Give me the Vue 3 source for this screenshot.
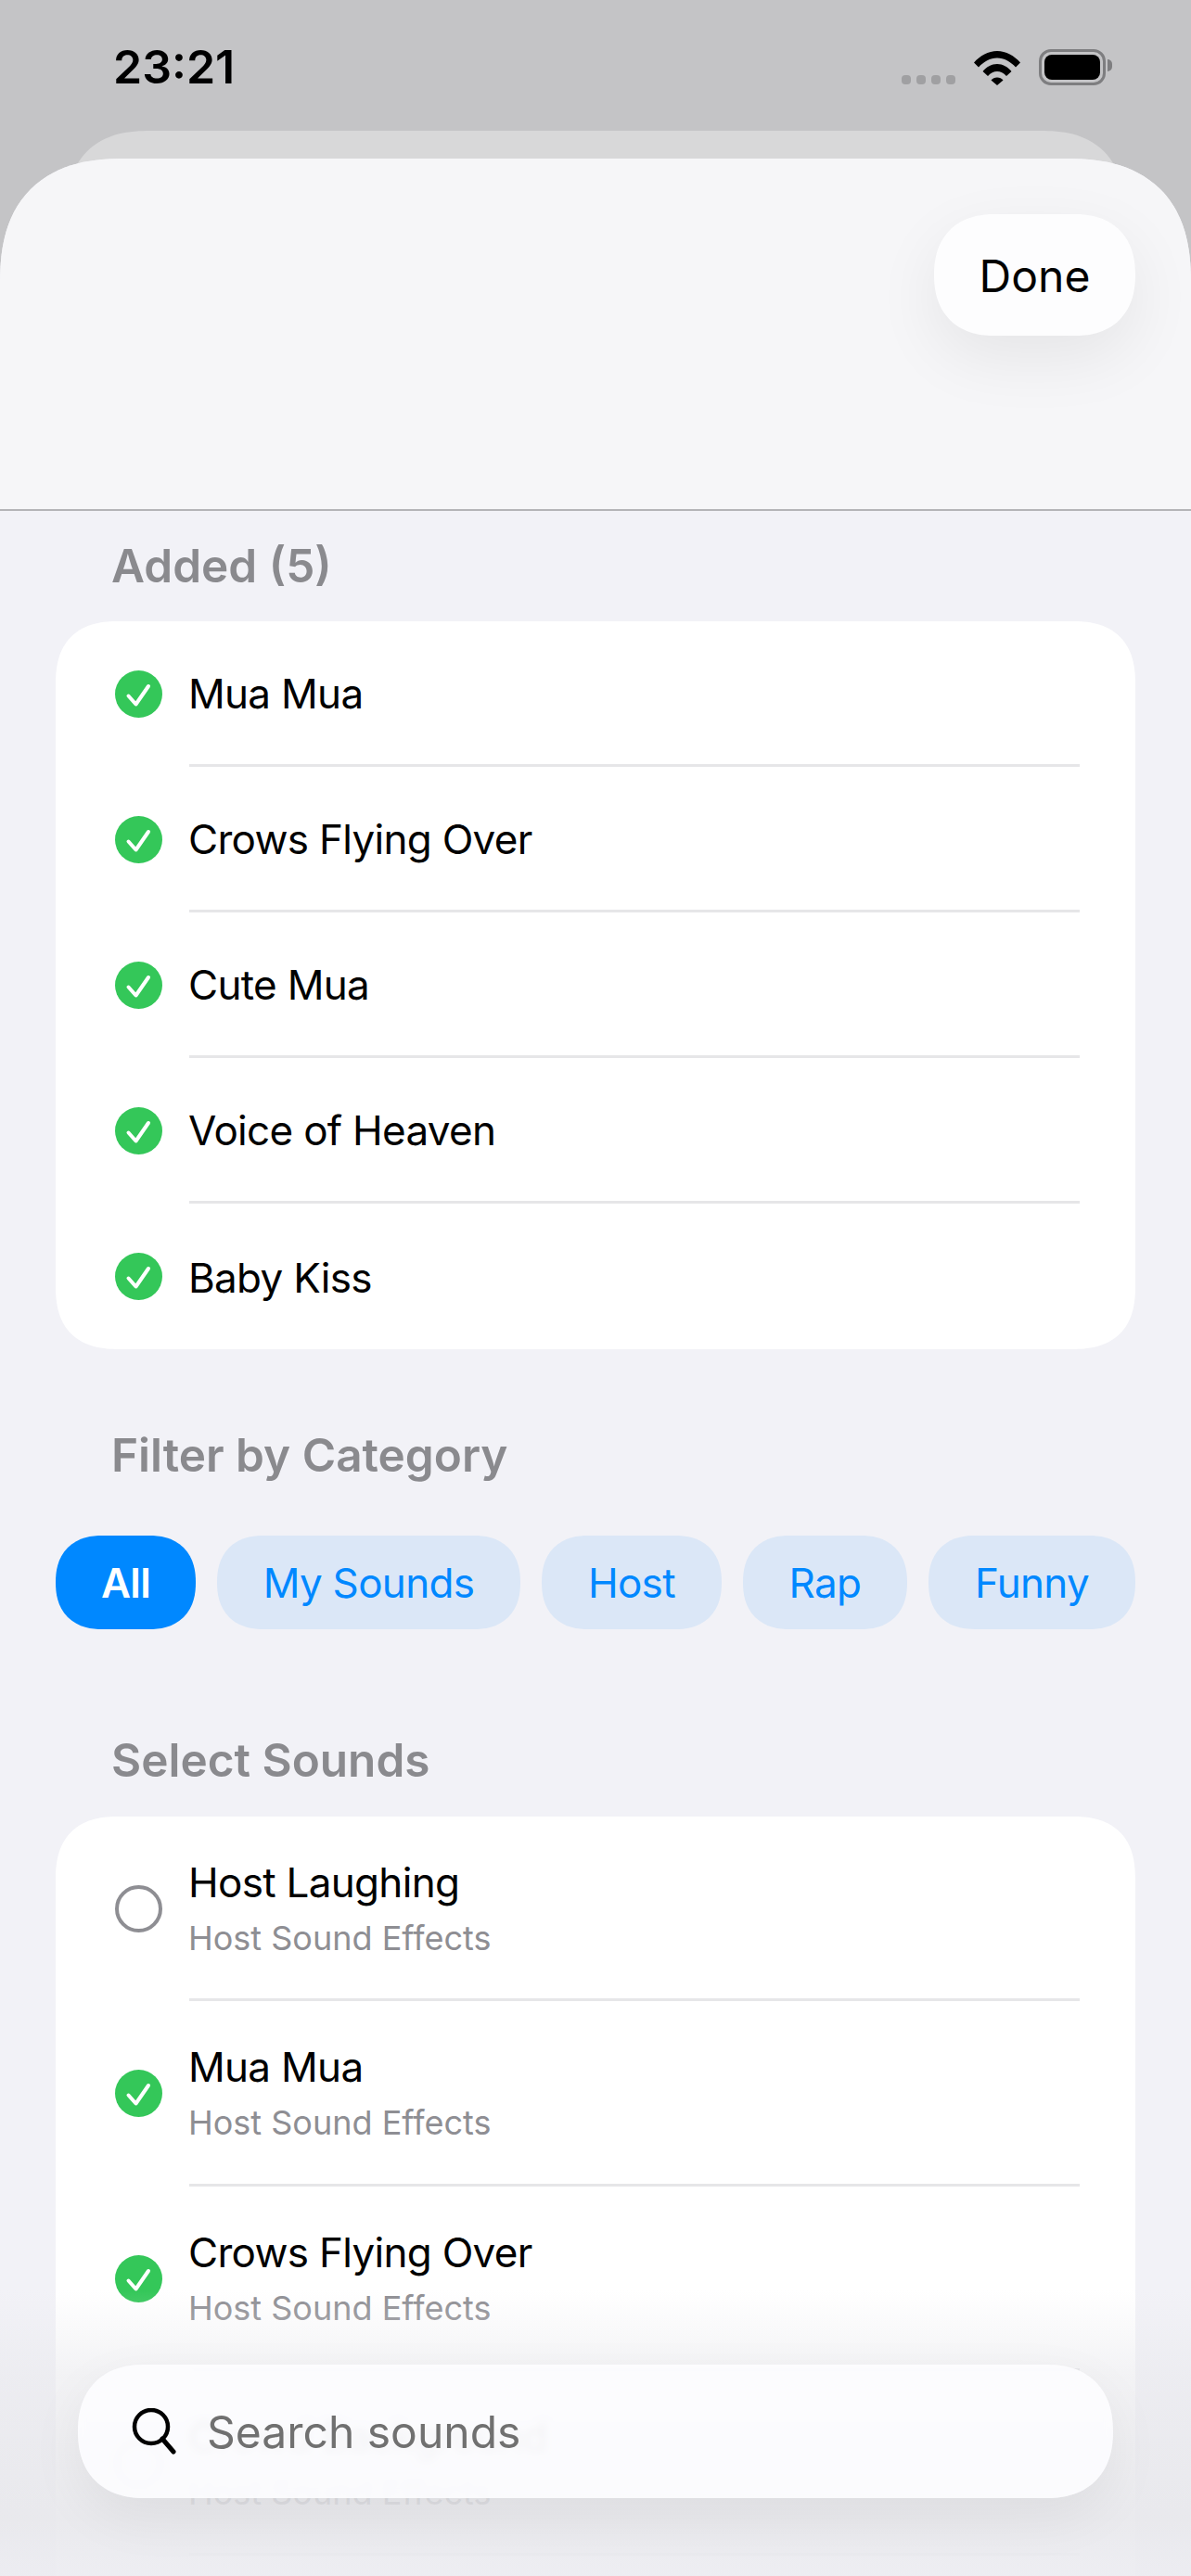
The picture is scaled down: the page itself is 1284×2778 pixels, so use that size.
<script setup>
const added = ['Mua Mua', 'Crows Flying Over', 'Cute Mua', 'Voice of Heaven', 'Baby Kiss']
const categories = ['All', 'My Sounds', 'Host', 'Rap', 'Funny']
const sounds = [
  { name: 'Host Laughing', on: false },
  { name: 'Mua Mua', on: true },
  { name: 'Crows Flying Over', on: true },
  { name: 'Crowd Background', on: false },
]
</script>

<template>
  <div class="screen">
    <div class="status">
      <span class="time">23:21</span>
      <div class="status-icons">
        <div class="dots"><i></i><i></i><i></i><i></i></div>
        <svg class="wifi" width="50" height="38" viewBox="0 0 50 38">
          <path d="M0 13.5C6.5 6 15.5 1 25 1s18.500 5 25 12.500l-5 5C39.500 12.500 32.500 8.500 25 8.500S10.500 12.500 5 18.500z" />
          <path d="M9.500 23C13.500 18 19 15 25 15s11.500 3 15.500 8l-5.500 5C32 24.500 28.500 23 25 23s-7 1.500-10 5z" />
          <path d="M18.500 32.500C20 30.500 22.500 29.500 25 29.500s5 1 6.500 3L25 38z" />
        </svg>
        <div class="battery"><div class="battery-fill"></div></div>
      </div>
    </div>

    <div class="peek"></div>

    <div class="sheet">
      <div class="sheet-head">
        <button class="done">Done</button>
      </div>

      <div class="content">
        <h2 class="label">Added (5)</h2>
        <div class="card">
          <div v-for="item in added" :key="item" class="row">
            <svg class="mark" width="51" height="51" viewBox="0 0 51 51">
              <circle cx="25.500" cy="25.500" r="25.500" fill="#34c759" />
              <path d="M14.500 27.500l8 9L36 17" fill="none" stroke="#fff" stroke-width="4" stroke-linecap="round" stroke-linejoin="round" />
            </svg>
            <div class="row-body"><div class="title">{{ item }}</div></div>
          </div>
        </div>

        <h2 class="label filter-label">Filter by Category</h2>
        <div class="chips">
          <span v-for="(cat, i) in categories" :key="cat" class="chip" :class="{ active: i === 0 }">{{ cat }}</span>
        </div>

        <h2 class="label select-label">Select Sounds</h2>
        <div class="card sounds">
          <div v-for="sound in sounds" :key="sound.name" class="row tall">
            <svg class="mark" width="51" height="51" viewBox="0 0 51 51">
              <template v-if="sound.on">
                <circle cx="25.500" cy="25.500" r="25.500" fill="#34c759" />
                <path d="M14.500 27.500l8 9L36 17" fill="none" stroke="#fff" stroke-width="4" stroke-linecap="round" stroke-linejoin="round" />
              </template>
              <circle v-else cx="25.500" cy="25.500" r="23.500" fill="none" stroke="#8e8e93" stroke-width="4" />
            </svg>
            <div class="row-body">
              <div class="title">{{ sound.name }}</div>
              <div class="sub">Host Sound Effects</div>
            </div>
          </div>
        </div>
      </div>
    </div>

    <div class="fade"></div>
    <div class="search">
      <svg width="50" height="50" viewBox="0 0 50 50">
        <circle cx="21" cy="20" r="18" fill="none" stroke="#000" stroke-width="4.500" />
        <path d="M33 33l12 14" fill="none" stroke="#000" stroke-width="5" stroke-linecap="round" />
      </svg>
      <span>Search sounds</span>
    </div>
  </div>
</template>

<style>
html, body {
  background: #c4c4c6;
}
</style>

<style scoped>
.screen {
  position: relative;
  width: 1284px;
  height: 2778px;
  overflow: hidden;
  background: #c4c4c6;
  font-family: Inter, "Liberation Sans", sans-serif;
  color: #000;
}

.status {
  height: 141px;
  box-sizing: border-box;
  padding: 46px 92px 0 122px;
  display: flex;
  justify-content: space-between;
  align-items: flex-start;
}

.time {
  font-size: 50px;
  line-height: 52px;
  font-weight: 600;
}

.status-icons {
  display: flex;
  align-items: flex-end;
  padding-top: 7px;
  gap: 20px;
}

.dots {
  display: flex;
  gap: 6px;
  padding-bottom: 1px;
}

.dots i {
  width: 10px;
  height: 10px;
  border-radius: 4px;
  background: #a0a0a2;
}

.wifi {
  display: block;
}

.battery {
  position: relative;
  width: 72px;
  height: 39px;
  box-sizing: border-box;
  border: 3.500px solid #7e7e80;
  border-radius: 13px;
  padding: 3px;
}

.battery::after {
  content: "";
  position: absolute;
  right: -10px;
  top: 8px;
  width: 5px;
  height: 13px;
  border-radius: 0 6px 6px 0;
  background: #7e7e80;
}

.battery-fill {
  height: 100%;
  background: #000;
  border-radius: 8px;
}

.peek {
  height: 90px;
  margin: 0 72px -60px;
  border-radius: 110px 110px 0 0;
  corner-shape: superellipse(1.3);
  background: #d8d8d9;
}

.sheet {
  position: relative;
  height: 2607px;
  border-radius: 135px 135px 0 0;
  corner-shape: superellipse(1.3);
  background: #f2f2f7;
  overflow: hidden;
}

.sheet-head {
  height: 380px;
  box-sizing: border-box;
  padding: 60px 60px 0 0;
  display: flex;
  justify-content: flex-end;
  align-items: flex-start;
  background: #f6f6f8;
  border-bottom: 2px solid #b4b4b7;
}

.done {
  width: 217px;
  height: 131px;
  border: none;
  border-radius: 66px;
  corner-shape: superellipse(1.2);
  background: #fdfdfe;
  box-shadow: 0 24px 70px rgba(0, 0, 0, 0.07);
  font-family: inherit;
  font-size: 48px;
  color: #000;
  padding: 2px 0 0;
}

.content {
  padding: 30px 60px 0;
}

.label {
  margin: 0;
  padding-left: 60px;
  font-size: 49.500px;
  line-height: 58px;
  font-weight: 600;
  color: #8a8a8e;
}

.card {
  margin-top: 31px;
  background: #fff;
  border-radius: 68px;
  corner-shape: superellipse(1.3);
}

.filter-label {
  margin-top: 85px;
}

.select-label {
  margin-top: 112px;
}

.sounds {
  margin-top: 32px;
  padding-bottom: 120px;
}

.chips {
  margin-top: 58px;
  display: flex;
  justify-content: space-between;
}

.chip {
  height: 101px;
  padding: 0 50px;
  display: flex;
  align-items: center;
  border-radius: 50px;
  corner-shape: superellipse(1.2);
  background: #dbe7f7;
  color: #0088ff;
  font-size: 44px;
  letter-spacing: -0.700px;
}

.chip.active {
  padding: 0 49px;
  background: #0088ff;
  color: #fff;
  font-weight: 600;
}

.row {
  display: flex;
  align-items: center;
  padding-left: 64px;
  gap: 28px;
}

.mark {
  flex: none;
  margin-right: 1px;
}

.row-body {
  flex: 1;
  height: 157px;
  box-sizing: border-box;
  margin-right: 60px;
  padding-top: 2px;
  display: flex;
  flex-direction: column;
  justify-content: center;
  font-size: 44px;
  letter-spacing: -0.700px;
  border-bottom: 3px solid #e6e6e8;
}

.row:last-child .row-body {
  border-bottom: none;
}

.tall .row-body,
.tall:last-child .row-body {
  height: 199.300px;
  justify-content: flex-start;
  padding-top: 42px;
  border-bottom: 3px solid #e6e6e8;
}

.title {
  margin-left: -1px;
  line-height: 58px;
}

.sub {
  margin-top: 6px;
  margin-left: -1px;
  font-size: 36px;
  line-height: 50px;
  letter-spacing: 0;
  color: #8e8e93;
}

.fade {
  position: absolute;
  left: 0;
  right: 0;
  top: 2470px;
  bottom: 0;
  background: linear-gradient(to bottom, rgba(232, 232, 236, 0), rgba(232, 232, 236, 0.55) 30%, rgba(232, 232, 236, 0.92) 80%, rgba(236, 236, 241, 0.92));
}

.search {
  position: absolute;
  left: 84px;
  top: 2550px;
  width: 1116px;
  height: 144px;
  box-sizing: border-box;
  padding: 0 0 0 58px;
  display: flex;
  align-items: center;
  gap: 31px;
  border-radius: 72px;
  corner-shape: superellipse(1.2);
  background: rgba(253, 253, 255, 0.88);
  backdrop-filter: blur(4px);
  box-shadow: 0 20px 60px rgba(0, 0, 0, 0.06);
  font-size: 48px;
  color: #707070;
}
</style>
